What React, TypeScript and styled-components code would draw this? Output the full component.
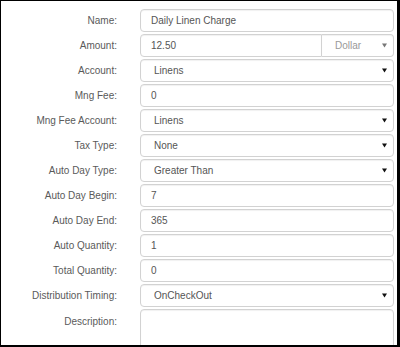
import styled, { createGlobalStyle } from 'styled-components';

const GlobalStyle = createGlobalStyle`
  html, body {
    margin: 0;
    padding: 0;
    background: #fff;
  }
`;

const Frame = styled("div")`
  box-sizing: border-box;
  width: 400px;
  height: 347px;
  overflow: hidden;
  background: #fff;
  border-style: solid;
  border-color: #000;
  border-width: 1px 3px 2px 1px;
  font-family: 'Liberation Sans', Arial, sans-serif;
  font-size: 10px;
  color: #555;
`;

const Form = styled("div")`
  display: flex;
  flex-direction: column;
  gap: 2px;
  padding: 8px 3px 0 0;
`;

const Row = styled("div")<{ $tall?: boolean }>`
  display: grid;
  grid-template-columns: 116px 1fr;
  column-gap: 23px;
  align-items: ${({ $tall }) => ($tall ? 'start' : 'center')};
  height: ${({ $tall }) => ($tall ? '60px' : '23px')};
`;

const Label = styled("label")<{ $tall?: boolean }>`
  text-align: right;
  color: #5a5a5a;
  padding-top: ${({ $tall }) => ($tall ? '7px' : '0')};
`;

const Field = styled("div")<{ $side?: 'left' | 'right' }>`
  box-sizing: border-box;
  display: flex;
  align-items: center;
  height: 23px;
  padding: 0 10px;
  border: 1px solid #d2d2d2;
  border-radius: ${({ $side }) =>
    $side === 'left' ? '4px 0 0 4px' : $side === 'right' ? '0 4px 4px 0' : '4px'};
  border-left-width: ${({ $side }) => ($side === 'right' ? '0' : '1px')};
  box-shadow: inset 0 1px 1px rgba(0, 0, 0, 0.06);
  background: #fff;
  color: #555;
  white-space: nowrap;
`;

const Select = styled(Field)<{ $muted?: boolean }>`
  justify-content: space-between;
  padding: 0 6px 0 13px;
  color: ${({ $muted }) => ($muted ? '#999' : '#555')};
`;

const TextArea = styled(Field)`
  height: 60px;
`;

const Group = styled("div")`
  display: grid;
  grid-template-columns: 1fr 72px;
`;

const Caret = ({ muted }: { muted?: boolean }) => (
  <svg width="5" height="5" viewBox="0 0 5 5">
    <polygon points="0,0.5 5,0.5 2.5,4.5" fill={muted ? '#777' : '#111'} />
  </svg>
);

type FieldDef = { label: string; value: string; kind: 'text' | 'select' };

const fields: FieldDef[] = [
  { label: 'Account:', value: 'Linens', kind: 'select' },
  { label: 'Mng Fee:', value: '0', kind: 'text' },
  { label: 'Mng Fee Account:', value: 'Linens', kind: 'select' },
  { label: 'Tax Type:', value: 'None', kind: 'select' },
  { label: 'Auto Day Type:', value: 'Greater Than', kind: 'select' },
  { label: 'Auto Day Begin:', value: '7', kind: 'text' },
  { label: 'Auto Day End:', value: '365', kind: 'text' },
  { label: 'Auto Quantity:', value: '1', kind: 'text' },
  { label: 'Total Quantity:', value: '0', kind: 'text' },
  { label: 'Distribution Timing:', value: 'OnCheckOut', kind: 'select' },
];

const App = () => {
  return (
    <>
      <GlobalStyle />
      <Frame>
        <Form>
          <Row>
            <Label>Name:</Label>
            <Field>Daily Linen Charge</Field>
          </Row>
          <Row>
            <Label>Amount:</Label>
            <Group>
              <Field $side="left">12.50</Field>
              <Select $side="right" $muted>
                Dollar
                <Caret muted />
              </Select>
            </Group>
          </Row>
          {fields.map((f) => (
            <Row key={f.label}>
              <Label>{f.label}</Label>
              {f.kind === 'select' ? (
                <Select>
                  {f.value}
                  <Caret />
                </Select>
              ) : (
                <Field>{f.value}</Field>
              )}
            </Row>
          ))}
          <Row $tall>
            <Label $tall>Description:</Label>
            <TextArea />
          </Row>
        </Form>
      </Frame>
    </>
  );
};

export default App;
